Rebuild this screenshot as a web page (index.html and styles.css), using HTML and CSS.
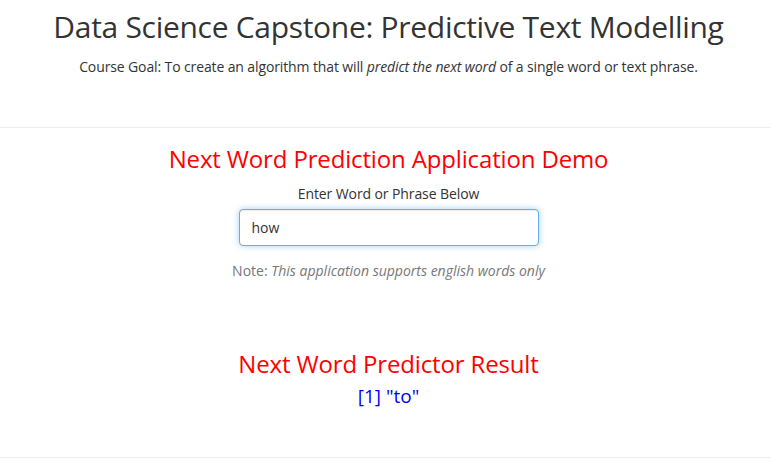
FILE: index.html
```html
<!DOCTYPE html>
<html lang="en">
<head>
<meta charset="utf-8">
<title>Data Science Capstone: Predictive Text Modelling</title>
<link rel="stylesheet" href="styles.css">
</head>
<body>
<div class="container">
  <header class="title-panel">
    <h2 class="title">Data Science Capstone: Predictive Text Modelling</h2>
    <p class="goal">Course Goal: To create an algorithm that will <em>predict the next word</em> of a single word or text phrase.</p>
  </header>
  <hr class="rule">
  <main class="main">
    <h3 class="red-heading">Next Word Prediction Application Demo</h3>
    <div class="form-group">
      <label class="label" for="phrase">Enter Word or Phrase Below</label>
      <input id="phrase" class="input" type="text" value="how">
    </div>
    <p class="note">Note: <em>This application supports english words only</em></p>
    <h3 class="red-heading result-heading">Next Word Predictor Result</h3>
    <div class="result">[1] "to"</div>
  </main>
  <hr class="rule bottom-rule">
</div>
</body>
</html>
```
FILE: styles.css
```css
* { box-sizing: border-box; }
html, body { margin: 0; padding: 0; background: #fff; }
body {
  font-family: "Open Sans", "Noto Sans", sans-serif;
  font-size: 14px;
  line-height: 20px;
  color: #333;
}
.container { padding: 0 0 0 6px; }
.title-panel { display: flex; flex-direction: column; align-items: center; }
.title {
  margin: 10px 0 0;
  font-size: 30px;
  line-height: 33px;
  font-weight: 400;
  color: #333;
  letter-spacing: -0.3px;
}
.goal {
  margin: 14px 0 0;
  font-size: 14px;
  line-height: 20px;
  color: #333;
  letter-spacing: -0.12px;
}
.rule {
  margin: 50px 0 0 -6px;
  border: 0;
  border-top: 1px solid #eee;
  height: 0;
}
.main { display: flex; flex-direction: column; align-items: center; }
.red-heading {
  margin: 18px 0 0;
  font-size: 24px;
  line-height: 26px;
  font-weight: 400;
  color: #ff0000;
  letter-spacing: -0.15px;
}
.form-group { display: flex; flex-direction: column; align-items: center; margin-top: 12px; }
.label { font-weight: 400; font-size: 14px; line-height: 20px; color: #333; letter-spacing: -0.1px; }
.input {
  margin-top: 5px;
  width: 300px;
  height: 37px;
  padding: 0 12px;
  font-family: inherit;
  font-size: 14px;
  color: #333;
  border: 1px solid #66afe9;
  border-radius: 4px;
  outline: 0;
  box-shadow: inset 0 1px 1px rgba(0,0,0,.075), 0 0 6px rgba(102,175,233,.6);
}
.note {
  margin: 15px 0 0;
  font-size: 14px;
  line-height: 20px;
  color: #777;
  letter-spacing: 0;
}
.result-heading { margin-top: 70px; }
.result {
  margin-top: 7px;
  font-size: 19px;
  line-height: 24px;
  color: #0000ff;
  letter-spacing: 0;
}
.bottom-rule { margin-top: 49px; }
```
